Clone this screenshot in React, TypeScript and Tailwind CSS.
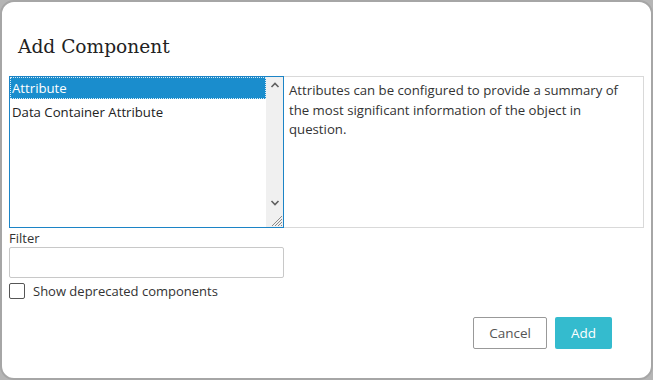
import React from "react";

const ui = { fontFamily: '"Open Sans", "Noto Sans", sans-serif' };

export default function App() {
  return (
    <div className="w-[653px] h-[380px] bg-[#b5b5b5]">
      <div className="w-full h-full rounded-[14px] border-2 border-[#a6a6a6] bg-white flex flex-col text-[#333]" style={ui}>
        <div className="pl-[16px] pt-[31px] h-[74px]">
          <h1 className="text-[18.6px] leading-[28px] text-[#222]" style={{ fontFamily: '"DejaVu Serif", "Liberation Serif", serif' }}>
            Add Component
          </h1>
        </div>
        <div className="flex pl-[7px] pr-[7px]">
          <div className="relative w-[275px] h-[152px] border border-[#1c84c6] flex">
            <div className="flex-1 flex flex-col">
              <div className="h-[22px] bg-[#1a8dcd] text-white text-[13.2px] leading-[20px] px-[1px] border border-dotted border-[#d8ecf8]">
                Attribute
              </div>
              <div className="h-[25px] text-[13.2px] leading-[26px] px-[2px] text-[#222]">Data Container Attribute</div>
            </div>
            <div className="w-[17px] bg-[#f0f0f0] flex flex-col items-center justify-between pt-[4px] pb-[20px] relative">
              <svg width="10" height="8" viewBox="0 0 10 8">
                <path d="M1.5 6 L5 2.5 L8.5 6" stroke="#606060" strokeWidth="1.6" fill="none" />
              </svg>
              <svg width="10" height="8" viewBox="0 0 10 8">
                <path d="M1.5 2 L5 5.5 L8.5 2" stroke="#606060" strokeWidth="1.6" fill="none" />
              </svg>
              <svg className="absolute bottom-0 right-0" width="14" height="14" viewBox="0 0 14 14">
                <path d="M13 3 L3 13 M13 6 L6 13 M13 9 L9 13 M13 12 L12 13" stroke="#8a8a8a" strokeWidth="1" />
              </svg>
            </div>
          </div>
          <div className="w-[360px] h-[152px] border border-[#d9d9d9] border-l-0 pl-[5px] pr-[20px] pt-[4px] text-[13.2px] leading-[19.5px] text-[#333]">
            Attributes can be configured to provide a summary of the most significant information of the object in question.
          </div>
        </div>
        <div className="pl-[7px] mt-[1px] w-[282px]">
          <div className="text-[13px] leading-[18px] text-[#333]">Filter</div>
          <div className="h-[31px] border border-[#c8c8c8] rounded-[2px]" />
          <label className="flex items-center mt-[4px] gap-[8px]">
            <span className="w-[16px] h-[16px] border-[1.5px] border-[#555] rounded-[2px]" />
            <span className="text-[13px] leading-[18px] text-[#333]">Show deprecated components</span>
          </label>
        </div>
        <div className="flex justify-end gap-[8px] pr-[39px] mt-[17px]">
          <button className="w-[74px] h-[32px] border border-[#999] rounded-[2px] text-[13.5px] text-[#555] bg-white">Cancel</button>
          <button className="w-[57px] h-[32px] rounded-[2px] text-[13.5px] text-white bg-[#34bbce]">Add</button>
        </div>
      </div>
    </div>
  );
}
